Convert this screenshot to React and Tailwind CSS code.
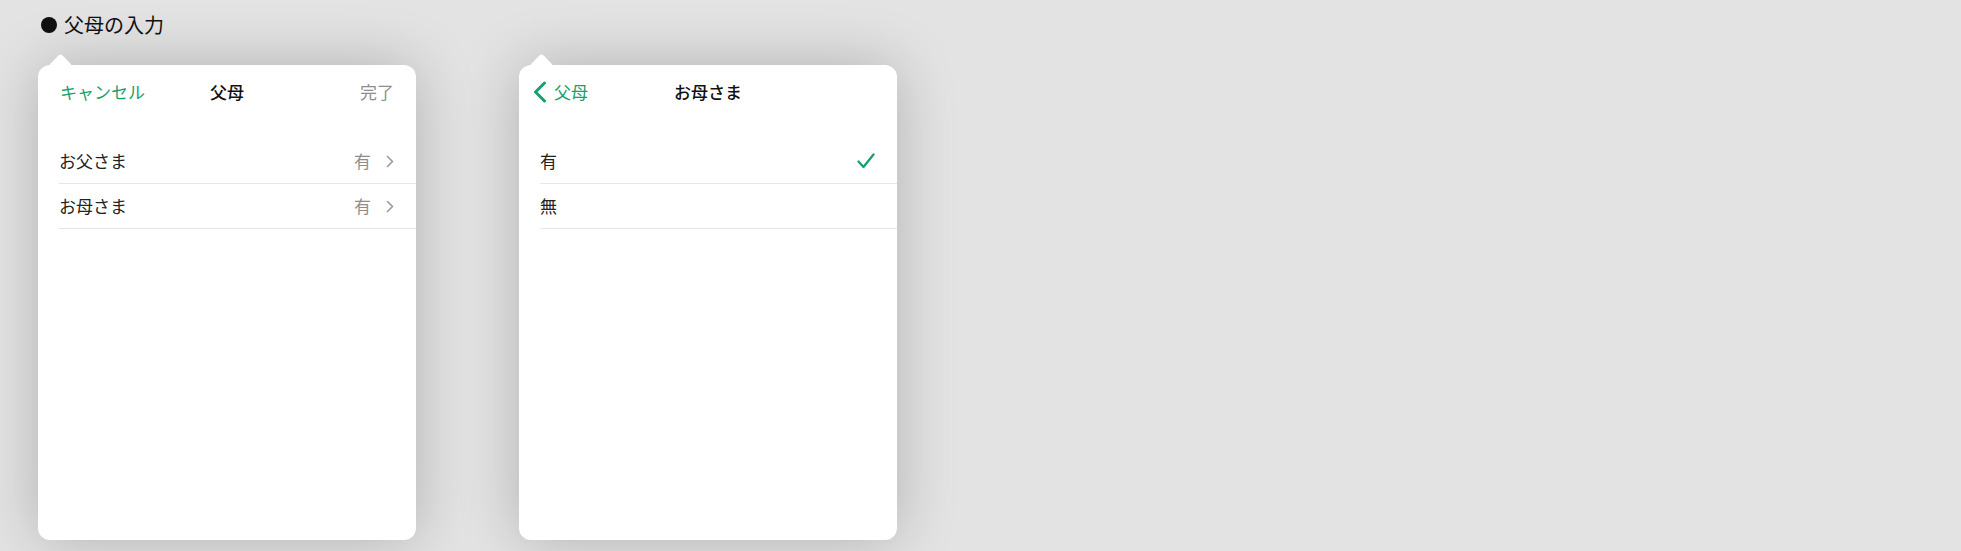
import { Fragment } from 'react';

const FONT = "font-['Noto_Sans_CJK_JP','Noto_Sans',sans-serif]";
const GREEN = 'text-[#17a06b]';

function Chevron() {
  return (
    <svg width="8" height="13" viewBox="0 0 8 13" className="ml-[15px] shrink-0">
      <path d="M1.5 1.5 L6.5 6.5 L1.5 11.5" fill="none" stroke="#9a9a9a" strokeWidth="1.6" strokeLinecap="round" strokeLinejoin="round" />
    </svg>
  );
}

function Check() {
  return (
    <svg width="18" height="16" viewBox="0 0 18 16" className="shrink-0">
      <path d="M1.5 8.5 L6.5 14 L16.5 1.5" fill="none" stroke="#17a06b" strokeWidth="2.3" strokeLinecap="round" strokeLinejoin="round" />
    </svg>
  );
}

function BackChevron() {
  return (
    <svg width="14" height="22" viewBox="0 0 14 22" className="shrink-0">
      <path d="M11.5 2 L2.5 11 L11.5 20" fill="none" stroke="#17a06b" strokeWidth="3" strokeLinecap="round" strokeLinejoin="round" />
    </svg>
  );
}

function Panel({ left, title, right, rows }) {
  return (
    <div className="relative w-[378px] h-[475px] bg-white rounded-[12px] shadow-[0_0_60px_rgba(0,0,0,0.22)]">
      {/* popover arrow */}
      <div className="absolute left-[14px] top-[-8px] w-[17px] h-[17px] bg-white rotate-45 rounded-[3px]" />
      <div className="relative h-[54px] flex items-center justify-between px-[22px]">
        <div className="flex items-center">{left}</div>
        <div className="absolute inset-x-0 top-0 h-full flex items-center justify-center pointer-events-none">
          <span className="text-[17px] font-medium text-[#111]">{title}</span>
        </div>
        <div className="flex items-center">{right}</div>
      </div>
      <div className="pt-[20px] pl-[21px]">
        {rows.map((r, i) => (
          <Fragment key={i}>
            <div className="h-[45px] flex items-center pr-[22px] border-b border-[#e6e6e6]">
              <span className="text-[17px] text-[#222]">{r.label}</span>
              <div className="ml-auto flex items-center">{r.accessory}</div>
            </div>
          </Fragment>
        ))}
      </div>
    </div>
  );
}

export default function App() {
  return (
    <div className={`w-[1961px] h-[551px] bg-[#e3e3e3] overflow-hidden ${FONT}`}>
      <div className="pl-[41px] pt-[12px] flex items-center h-[38px]">
        <span className="w-4 h-4 rounded-full bg-[#111] shrink-0" />
        <span className="ml-[7px] text-[20px] text-[#111] leading-none">父母の入力</span>
      </div>

      <div className="flex gap-[103px] pl-[38px] pt-[27px]">
        <Panel
          left={<span className={`text-[17px] ${GREEN}`}>キャンセル</span>}
          title="父母"
          right={<span className="text-[17px] text-[#8e8e8e]">完了</span>}
          rows={[
            { label: 'お父さま', accessory: (<><span className="text-[17px] text-[#8e8e8e]">有</span><Chevron /></>) },
            { label: 'お母さま', accessory: (<><span className="text-[17px] text-[#8e8e8e]">有</span><Chevron /></>) },
          ]}
        />
        <Panel
          left={<div className="flex items-center -ml-[8px]"><BackChevron /><span className={`ml-[7px] text-[17px] ${GREEN}`}>父母</span></div>}
          title="お母さま"
          right={null}
          rows={[
            { label: '有', accessory: <Check /> },
            { label: '無', accessory: null },
          ]}
        />
      </div>
    </div>
  );
}
